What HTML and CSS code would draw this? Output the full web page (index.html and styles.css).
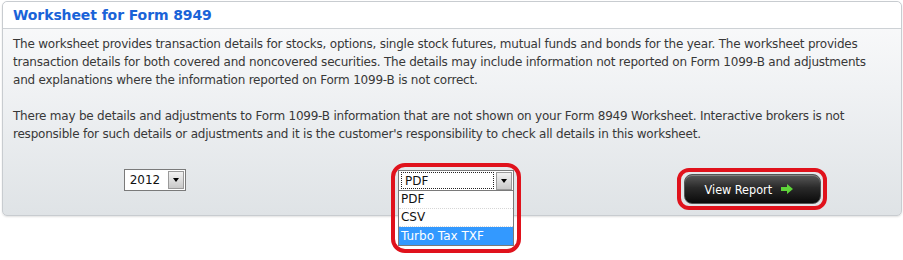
FILE: index.html
```html
<!DOCTYPE html>
<html lang="en">
  <head>
    <meta charset="utf-8" />
    <title>Worksheet for Form 8949</title>
    <link rel="stylesheet" href="styles.css">
  </head>
  <body>
    <div class="panel">
      <div class="panel__head">
        <h2 class="panel__title">Worksheet for Form 8949</h2>
      </div>
      <div class="panel__body">
        <p class="panel__text">The worksheet provides transaction details for stocks, options, single stock futures, mutual funds and bonds for the year. The worksheet provides transaction details for both covered and noncovered securities. The details may include information not reported on Form 1099-B and adjustments and explanations where the information reported on Form 1099-B is not correct.</p>
        <p class="panel__text">There may be details and adjustments to Form 1099-B information that are not shown on your Form 8949 Worksheet. Interactive brokers is not responsible for such details or adjustments and it is the customer's responsibility to check all details in this worksheet.</p>

        <div class="controls">
          <div class="controls__cell">
            <div class="select select--year">
              <span class="select__value">2012</span>
              <span class="select__arrow"></span>
            </div>
          </div>

          <div class="controls__cell">
            <!-- anel vermelho em volta do seletor aberto -->
            <div class="ring ring--format">
              <div class="select select--format">
                <span class="select__value select__value--focus">PDF</span>
                <span class="select__arrow"></span>
              </div>
              <ul class="select__list">
                <li class="select__option">PDF</li>
                <li class="select__option">CSV</li>
                <li class="select__option select__option--active">Turbo Tax TXF</li>
              </ul>
            </div>
          </div>

          <div class="controls__cell">
            <div class="ring ring--button">
              <button class="btn" type="button">
                View Report
                <svg class="btn__icon" viewBox="0 0 12 10" width="12" height="10">
                  <path d="M0 3 H6 V0 L12 5 L6 10 V7 H0 Z" fill="#5fd43a" />
                </svg>
              </button>
            </div>
          </div>
        </div>
      </div>
    </div>
  </body>
</html>
```

FILE: styles.css
```css
/* Base */
*, *::before, *::after {
  box-sizing: border-box;
}

html, body {
  margin: 0;
  padding: 0;
  background: #fff;
  font-family: 'DejaVu Sans', sans-serif;
  color: #383838;
}

body {
  min-height: 260px;
}

/* Painel principal */
.panel {
  position: relative;
  width: 900px;
  margin: 1px 0 0 2px;
  border: 1px solid #c8ccd0;
  border-radius: 5px;
  box-shadow: 0 1px 2px rgba(0, 0, 0, 0.12);
  background: linear-gradient(180deg, #fbfbfc 0%, #f0f2f4 40%, #dfe3e6 100%);
}

.panel__head {
  height: 27px;
  padding: 0 10px;
  border-bottom: 1px solid #cdd1d5;
  border-radius: 5px 5px 0 0;
  background: #fff;
}

.panel__title {
  margin: 0;
  font-size: 14px;
  font-weight: bold;
  line-height: 26px;
  letter-spacing: -0.1px;
  color: #1a63d8;
}

.panel__body {
  padding: 6px 10px 0 10px;
  height: 186px;
}

.panel__text {
  margin: 0 0 18px 0;
  font-size: 12px;
  line-height: 18px;
  letter-spacing: -0.22px;
}

/* Linha de controles */
.controls {
  display: grid;
  grid-template-columns: 1fr 1fr 1fr;
  height: 44px;
  margin: 20px -10px 0 -10px;
}

.controls__cell {
  display: flex;
  justify-content: center;
  align-items: flex-start;
}

/* Select desenhado a mao */
.select {
  display: flex;
  align-items: center;
  background: #fff;
  border: 1px solid #7a7a7a;
  font-size: 12px;
  color: #111;
}

.select--year {
  width: 62px;
  height: 22px;
  margin-top: 6px;
  margin-left: 4px;
  padding-left: 5px;
}

.select--format {
  width: 116px;
  height: 21px;
  padding-left: 2px;
}

.select__value {
  flex: 1;
  line-height: 17px;
}

.select__value--focus {
  height: 17px;
  padding-left: 3px;
  margin-right: 2px;
  border: 1px dotted #222;
}

.select__arrow {
  position: relative;
  width: 16px;
  height: 18px;
  margin-right: 1px;
  border: 1px solid #9a9a9a;
  background: linear-gradient(180deg, #f2f2f2 0%, #c9c9c9 100%);
}

.select__arrow::after {
  content: "";
  position: absolute;
  left: 4px;
  top: 6px;
  border-left: 3.5px solid transparent;
  border-right: 3.5px solid transparent;
  border-top: 4px solid #000;
}

.select__list {
  list-style: none;
  margin: 0;
  padding: 0;
  width: 116px;
  background: #fff;
  border: 1px solid #7a7a7a;
  border-top: 0;
  font-size: 12px;
  color: #111;
}

.select__option {
  height: 18px;
  line-height: 17px;
  padding-left: 2px;
  border-bottom: 1px dotted #d6d6d6;
}

.select__option--active {
  background: #3399ff;
  color: #fff;
  border-bottom: 0;
  line-height: 18px;
}

/* Aneis vermelhos de destaque */
.ring {
  position: relative;
  z-index: 2;
  border: 4px solid #e0121c;
  padding: 3px;
}

.ring--format {
  margin-left: 8px;
  border-radius: 14px;
  padding: 3px;
}

.ring--button {
  margin-top: 5px;
  margin-left: 2px;
  border-radius: 12px;
  padding: 2px 2px 2px 3px;
}

/* Botao escuro */
.btn {
  display: flex;
  align-items: center;
  justify-content: center;
  gap: 9px;
  width: 137px;
  height: 30px;
  padding: 0 8px 0 0;
  border: 1px solid #555;
  border-radius: 8px;
  background: linear-gradient(180deg, #5a5a5a 0%, #2a2a2a 45%, #0a0a0a 100%);
  box-shadow: inset 0 1px 0 rgba(255, 255, 255, 0.25);
  font-family: 'DejaVu Sans Condensed', 'DejaVu Sans', sans-serif;
  font-size: 12.5px;
  color: #fff;
  cursor: pointer;
}

.btn__icon {
  display: block;
}
```
